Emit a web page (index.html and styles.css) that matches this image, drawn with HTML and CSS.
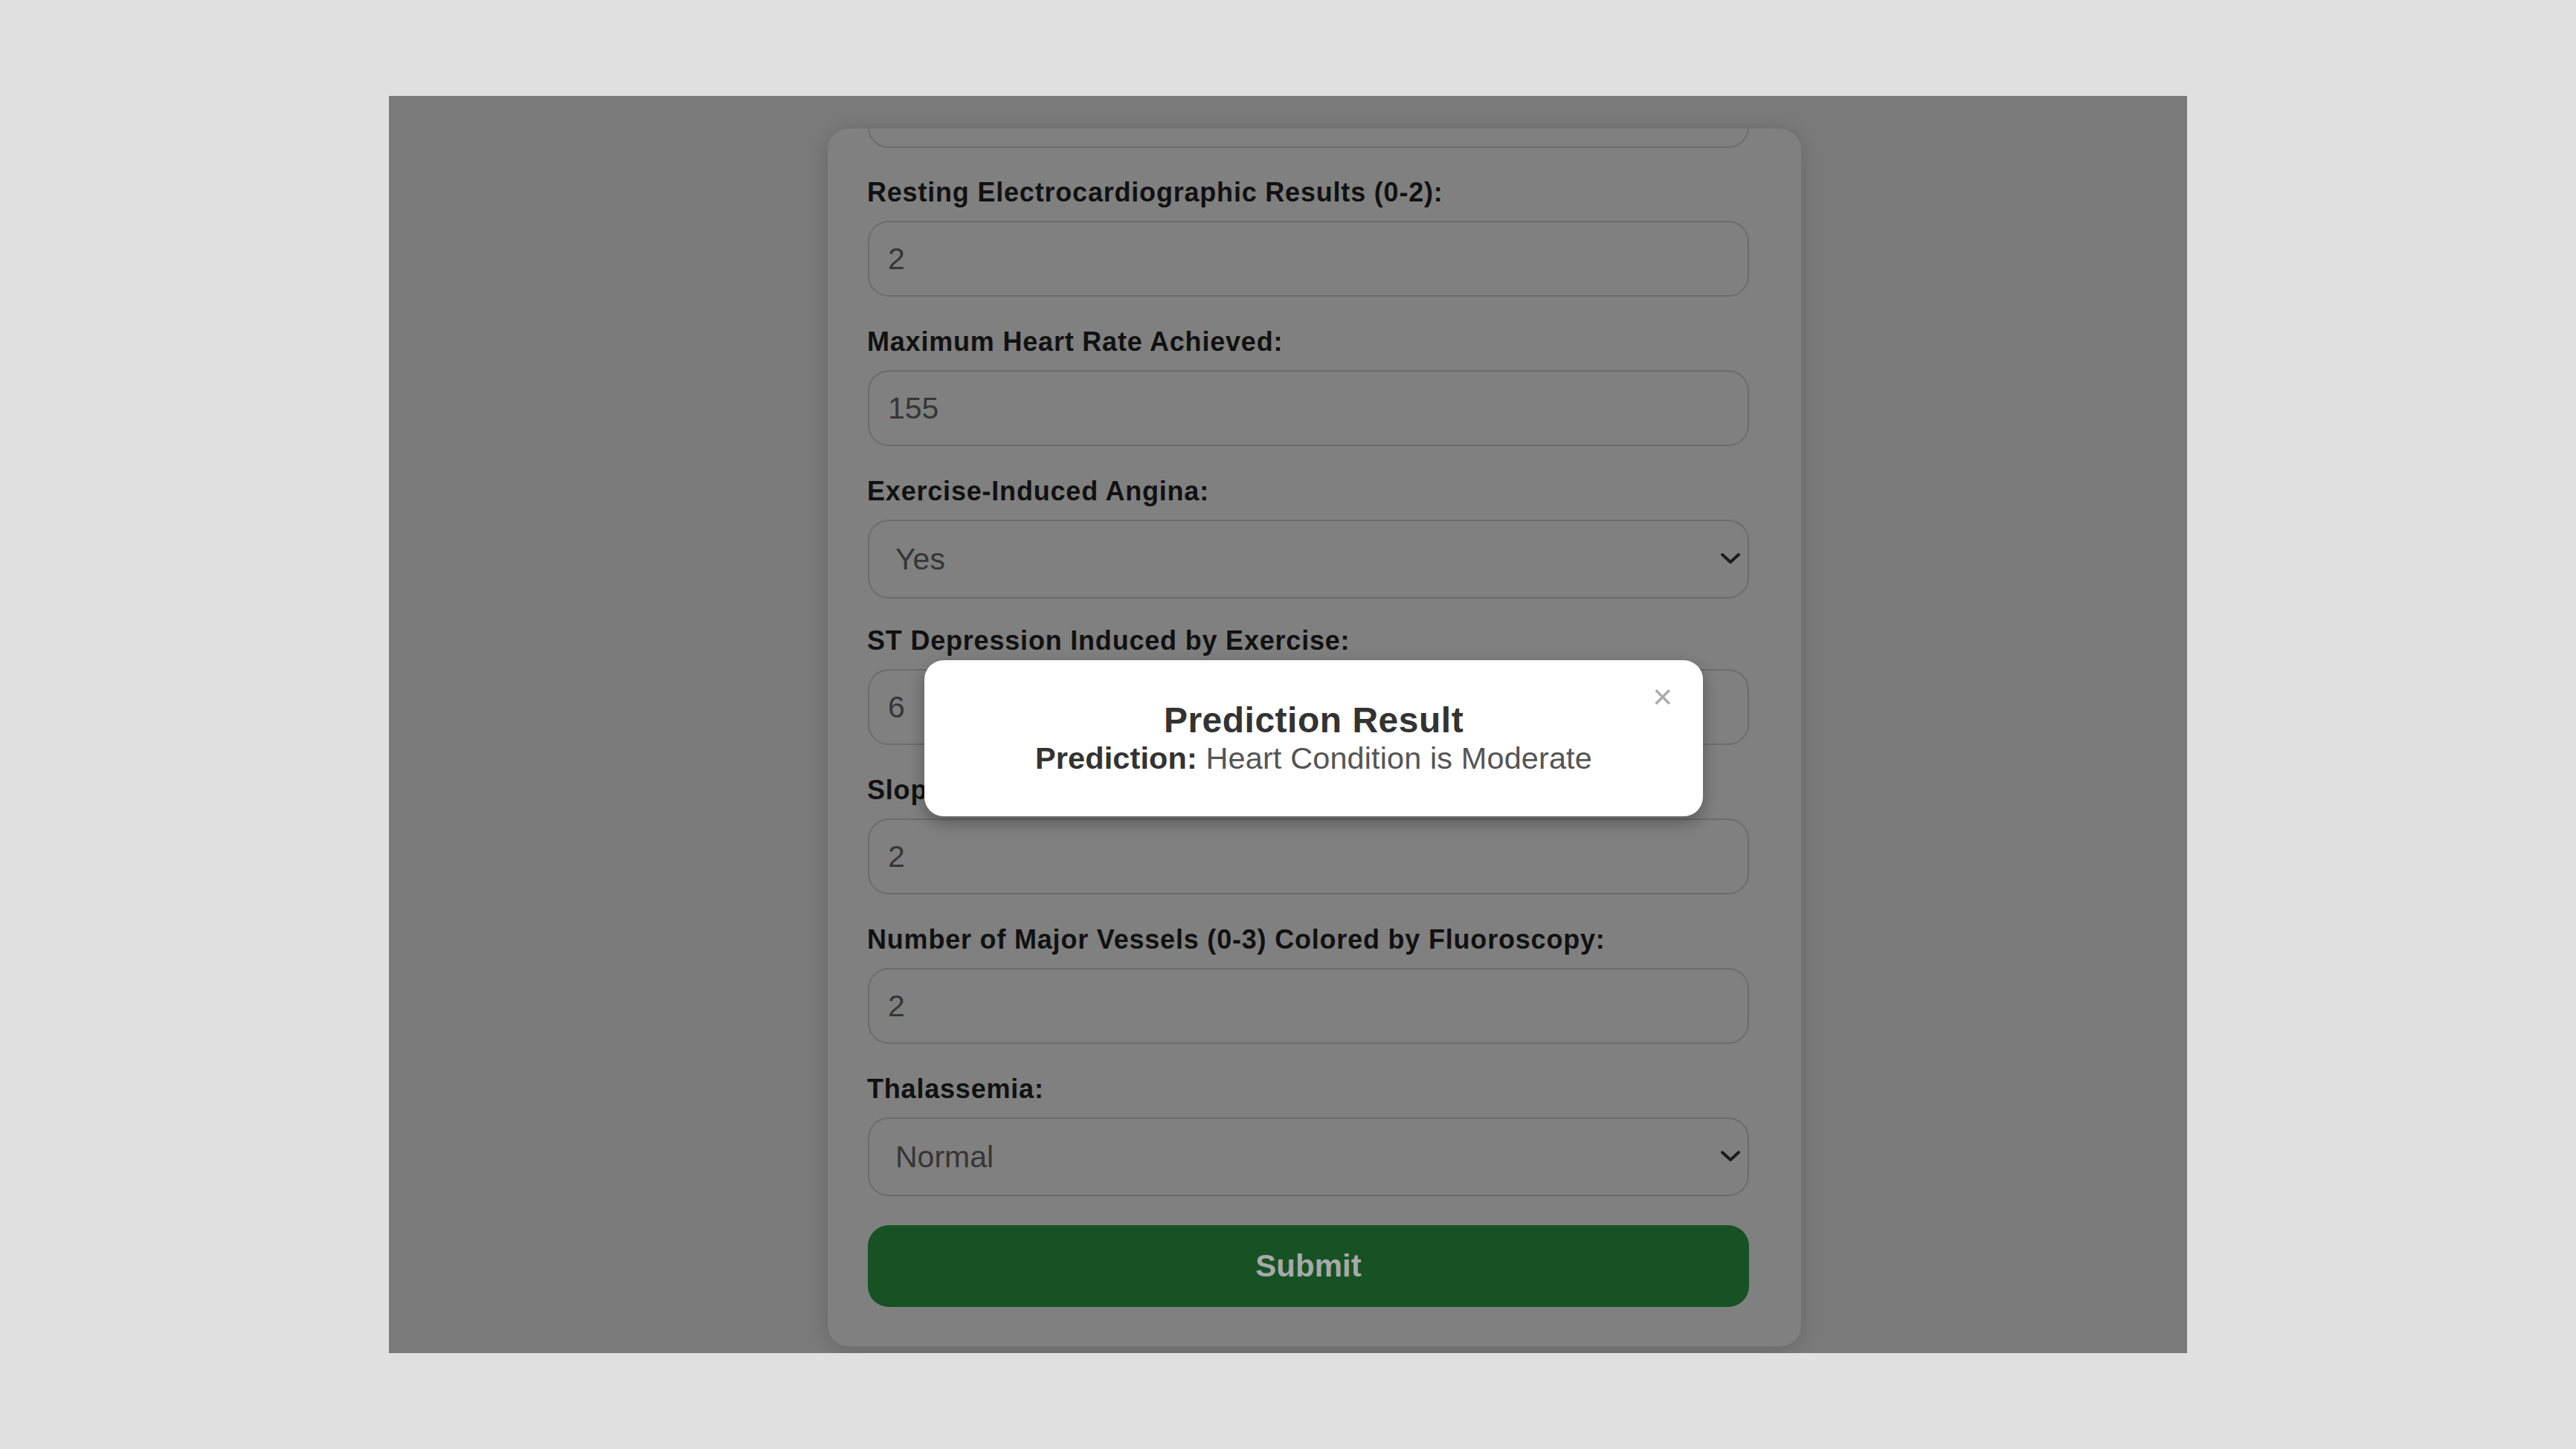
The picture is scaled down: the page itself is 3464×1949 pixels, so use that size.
FILE: index.html
```html
<!DOCTYPE html>
<html lang="en">
<head>
<meta charset="utf-8">
<title>Heart Disease Prediction</title>
<link rel="stylesheet" href="styles.css">
</head>
<body>
<div class="frame">
  <div class="card">
    <form class="form">
      <input class="control control-cut" type="text" value="">

      <label class="field-label">Resting Electrocardiographic Results (0-2):</label>
      <input class="control" type="text" value="2">

      <label class="field-label">Maximum Heart Rate Achieved:</label>
      <input class="control" type="text" value="155">

      <label class="field-label">Exercise-Induced Angina:</label>
      <div class="select-wrap">
        <select class="control select"><option>Yes</option><option>No</option></select>
        <svg class="chev" width="26" height="16" viewBox="0 0 26 16"><polyline points="2,3 13,13 24,3" fill="none" stroke="#1c1c1c" stroke-width="4" stroke-linecap="round" stroke-linejoin="round"/></svg>
      </div>

      <label class="field-label">ST Depression Induced by Exercise:</label>
      <input class="control" type="text" value="6">

      <label class="field-label">Slope of the Peak Exercise ST Segment:</label>
      <input class="control" type="text" value="2">

      <label class="field-label">Number of Major Vessels (0-3) Colored by Fluoroscopy:</label>
      <input class="control" type="text" value="2">

      <label class="field-label">Thalassemia:</label>
      <div class="select-wrap">
        <select class="control select"><option>Normal</option><option>Fixed Defect</option><option>Reversible Defect</option></select>
        <svg class="chev" width="26" height="16" viewBox="0 0 26 16"><polyline points="2,3 13,13 24,3" fill="none" stroke="#1c1c1c" stroke-width="4" stroke-linecap="round" stroke-linejoin="round"/></svg>
      </div>

      <button class="submit" type="button">Submit</button>
    </form>
  </div>

  <div class="modal">
    <span class="close">&times;</span>
    <h2 class="modal-title">Prediction Result</h2>
    <p class="modal-text"><strong class="modal-key">Prediction:</strong> Heart Condition is Moderate</p>
  </div>
</div>
</body>
</html>
```

FILE: styles.css
```css
html, body {
  margin: 0;
  padding: 0;
}

body {
  background: #e0e0e0;
  width: 3464px;
  height: 1949px;
  overflow: hidden;
  font-family: "Liberation Sans", Arial, sans-serif;
}

.frame {
  position: relative;
  margin-left: 523px;
  margin-top: 129px;
  width: 2418px;
  height: 1691px;
  background: #7a7a7a;
  overflow: hidden;
  display: flow-root;
}

.card {
  margin-left: 590px;
  margin-top: 44px;
  width: 1309px;
  box-sizing: border-box;
  padding: 0 70px 53px 54px;
  background: #808080;
  border-radius: 28px;
  box-shadow: 0 4px 26px rgba(0, 0, 0, 0.16);
  overflow: hidden;
}

.form {
  display: flow-root;
}

.field-label {
  display: block;
  margin: 0 0 18px -1px;
  font-size: 36px;
  line-height: 40px;
  font-weight: bold;
  letter-spacing: 0.8px;
  color: #111;
}

.control {
  display: block;
  box-sizing: border-box;
  width: 1185px;
  height: 102px;
  margin: 0 0 41px;
  padding: 0 20px 0 25px;
  border: 2px solid #6c6c6c;
  border-radius: 28px;
  background: #808080;
  font-family: "Liberation Sans", Arial, sans-serif;
  font-size: 41px;
  color: #363636;
  outline: none;
}

.control-cut {
  margin-top: -76px;
  margin-bottom: 40px;
}

.select-wrap {
  position: relative;
  width: 1185px;
  margin: 0 0 37px;
}

.select {
  -webkit-appearance: none;
  appearance: none;
  height: 106px;
  margin: 0;
  padding-left: 35px;
}

.chev {
  position: absolute;
  right: 12px;
  top: 44px;
  pointer-events: none;
}

.submit {
  display: block;
  width: 1185px;
  height: 110px;
  margin: 39px 0 0;
  border: none;
  border-radius: 28px;
  background: #165224;
  color: #a9a9a9;
  font-family: "Liberation Sans", Arial, sans-serif;
  font-size: 42px;
  font-weight: bold;
}

.modal {
  position: absolute;
  left: 720px;
  top: 759px;
  width: 1047px;
  box-sizing: border-box;
  padding: 53px 40px 54px;
  background: #fff;
  border-radius: 26px;
  box-shadow: 0 8px 22px rgba(0, 0, 0, 0.32);
  text-align: center;
}

.close {
  position: absolute;
  top: 24px;
  right: 41px;
  font-size: 46px;
  line-height: 50px;
  color: #aaa;
}

.modal-title {
  margin: 0;
  font-size: 48px;
  line-height: 55px;
  font-weight: bold;
  letter-spacing: 0.5px;
  color: #333;
}

.modal-text {
  margin: 0;
  font-size: 41.5px;
  line-height: 48px;
  letter-spacing: 0.1px;
  color: #555;
}

.modal-key {
  color: #333;
}
```
